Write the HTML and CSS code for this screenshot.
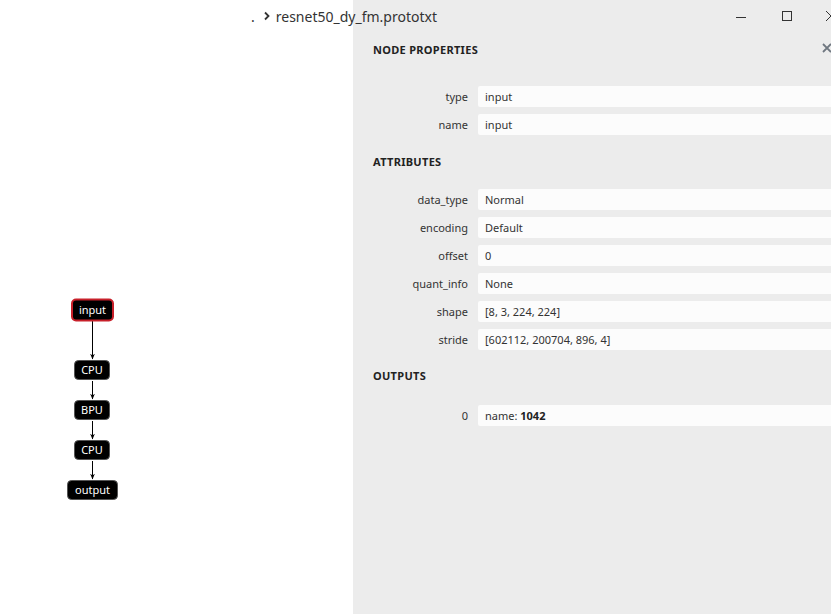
FILE: index.html
```html
<!DOCTYPE html>
<html>
<head>
<meta charset="utf-8">
<link rel="stylesheet" href="styles.css">
</head>
<body>
<div class="app">
  <div class="canvas">
    <svg class="graph" width="353" height="614" viewBox="0 0 353 614">
      <defs>
        <marker id="arr" viewBox="0 0 10 10" refX="9" refY="5" markerWidth="6" markerHeight="6" orient="auto">
          <path d="M0 1 L10 5 L0 9 L3 5 Z" fill="#000"/>
        </marker>
      </defs>
      <line x1="92.5" y1="321" x2="92.5" y2="359" stroke="#000" stroke-width="1" marker-end="url(#arr)"/>
      <line x1="92.5" y1="381" x2="92.5" y2="399" stroke="#000" stroke-width="1" marker-end="url(#arr)"/>
      <line x1="92.5" y1="421" x2="92.5" y2="439" stroke="#000" stroke-width="1" marker-end="url(#arr)"/>
      <line x1="92.5" y1="461" x2="92.5" y2="479" stroke="#000" stroke-width="1" marker-end="url(#arr)"/>
      <rect x="72" y="299.5" width="41" height="21" rx="4" fill="#000" stroke="#c8202a" stroke-width="2"/>
      <text x="92.5" y="314" class="nt">input</text>
      <rect x="74.5" y="360.5" width="35" height="19" rx="4" fill="#000" stroke="#555" stroke-width="1"/>
      <text x="92" y="374" class="nt">CPU</text>
      <rect x="74.5" y="400.5" width="35" height="19" rx="4" fill="#000" stroke="#555" stroke-width="1"/>
      <text x="92" y="414" class="nt">BPU</text>
      <rect x="74.5" y="440.5" width="35" height="19" rx="4" fill="#000" stroke="#555" stroke-width="1"/>
      <text x="92" y="454" class="nt">CPU</text>
      <rect x="67.5" y="480.5" width="50" height="19" rx="4" fill="#000" stroke="#555" stroke-width="1"/>
      <text x="92.5" y="494" class="nt">output</text>
    </svg>
  </div>
  <div class="panel">
    <div class="panel-head">
      <span class="panel-title">NODE PROPERTIES</span>
      <svg class="panel-close" width="10" height="10" viewBox="0 0 10 10"><path d="M1 1 L9 9 M9 1 L1 9" stroke="#6f7780" stroke-width="1.8"/></svg>
    </div>
    <div class="rows first">
      <div class="row"><div class="label">type</div><div class="value">input</div></div>
      <div class="row"><div class="label">name</div><div class="value">input</div></div>
    </div>
    <div class="section">ATTRIBUTES</div>
    <div class="rows">
      <div class="row"><div class="label">data_type</div><div class="value">Normal</div></div>
      <div class="row"><div class="label">encoding</div><div class="value">Default</div></div>
      <div class="row"><div class="label">offset</div><div class="value">0</div></div>
      <div class="row"><div class="label">quant_info</div><div class="value">None</div></div>
      <div class="row"><div class="label">shape</div><div class="value">[8, 3, 224, 224]</div></div>
      <div class="row"><div class="label">stride</div><div class="value">[602112, 200704, 896, 4]</div></div>
    </div>
    <div class="section">OUTPUTS</div>
    <div class="rows last">
      <div class="row"><div class="label">0</div><div class="value">name: <b>1042</b></div></div>
    </div>
  </div>
  <div class="titlebar">
    <span class="crumb">.</span>
    <svg class="chev" width="8" height="10" viewBox="0 0 8 10"><path d="M2 1.5 L5.5 5 L2 8.5" fill="none" stroke="#333" stroke-width="1.8"/></svg>
    <span class="fname">resnet50_dy_fm.prototxt</span>
  </div>
  <div class="winctl">
    <svg class="wc-min" width="12" height="12" viewBox="0 0 12 12"><path d="M1 7.5 H11" stroke="#333" stroke-width="1"/></svg>
    <svg class="wc-max" width="12" height="12" viewBox="0 0 12 12"><rect x="1.5" y="1.5" width="9" height="9" fill="none" stroke="#333" stroke-width="1"/></svg>
    <svg class="wc-close" width="12" height="12" viewBox="0 0 12 12"><path d="M1 1 L11 11 M11 1 L1 11" stroke="#333" stroke-width="1"/></svg>
  </div>
</div>
</body>
</html>
```
FILE: styles.css
```css
html, body {
  margin: 0;
  padding: 0;
  width: 831px;
  height: 614px;
  overflow: hidden;
  background: #fff;
  font-family: "Noto Sans", "DejaVu Sans", sans-serif;
  color: #333;
}
.app {
  position: relative;
  width: 831px;
  height: 614px;
  display: flex;
}
.canvas {
  width: 353px;
  height: 614px;
  flex: none;
  background: #fff;
}
.graph { display: block; }
.nt {
  font-family: "Noto Sans", "DejaVu Sans", sans-serif;
  font-size: 11px;
  fill: #fff;
  text-anchor: middle;
}
.panel {
  flex: 1;
  background: #ececec;
  padding-left: 20px;
  padding-top: 42px;
  box-sizing: border-box;
  font-size: 11px;
  overflow: hidden;
}
.panel-head {
  display: flex;
  align-items: center;
  justify-content: space-between;
  height: 14px;
}
.panel-title, .section {
  font-weight: bold;
  font-size: 11px;
  letter-spacing: 0.3px;
  color: #222;
}
.panel-close {
  margin-right: -1px;
  margin-top: -2px;
}
.rows {
  display: flex;
  flex-direction: column;
  gap: 7px;
  padding-top: 20px;
  padding-bottom: 19px;
}
.rows.first { padding-top: 30px; padding-bottom: 20px; }
.rows.last { padding-top: 22px; }
.section {
  height: 14px;
  line-height: 14px;
}
.row {
  display: flex;
  align-items: center;
  height: 21px;
}
.label {
  width: 95px;
  text-align: right;
  padding-right: 10px;
  flex: none;
  color: #333;
}
.value {
  flex: 1;
  height: 21px;
  line-height: 21px;
  background: #fcfcfc;
  border-radius: 2px 0 0 2px;
  padding-left: 7px;
  color: #333;
  white-space: nowrap;
}
.value b { color: #222; }
.titlebar {
  position: absolute;
  left: 251px;
  top: 7px;
  display: flex;
  align-items: center;
  gap: 6px;
  font-size: 14px;
  color: #333;
  height: 18px;
}
.chev { margin-left: 2px; margin-right: -1px; }
.winctl {
  position: absolute;
  top: 10px;
  left: 735px;
  display: flex;
  gap: 34px;
}
.wc-close { margin-left: -2px; }
```
